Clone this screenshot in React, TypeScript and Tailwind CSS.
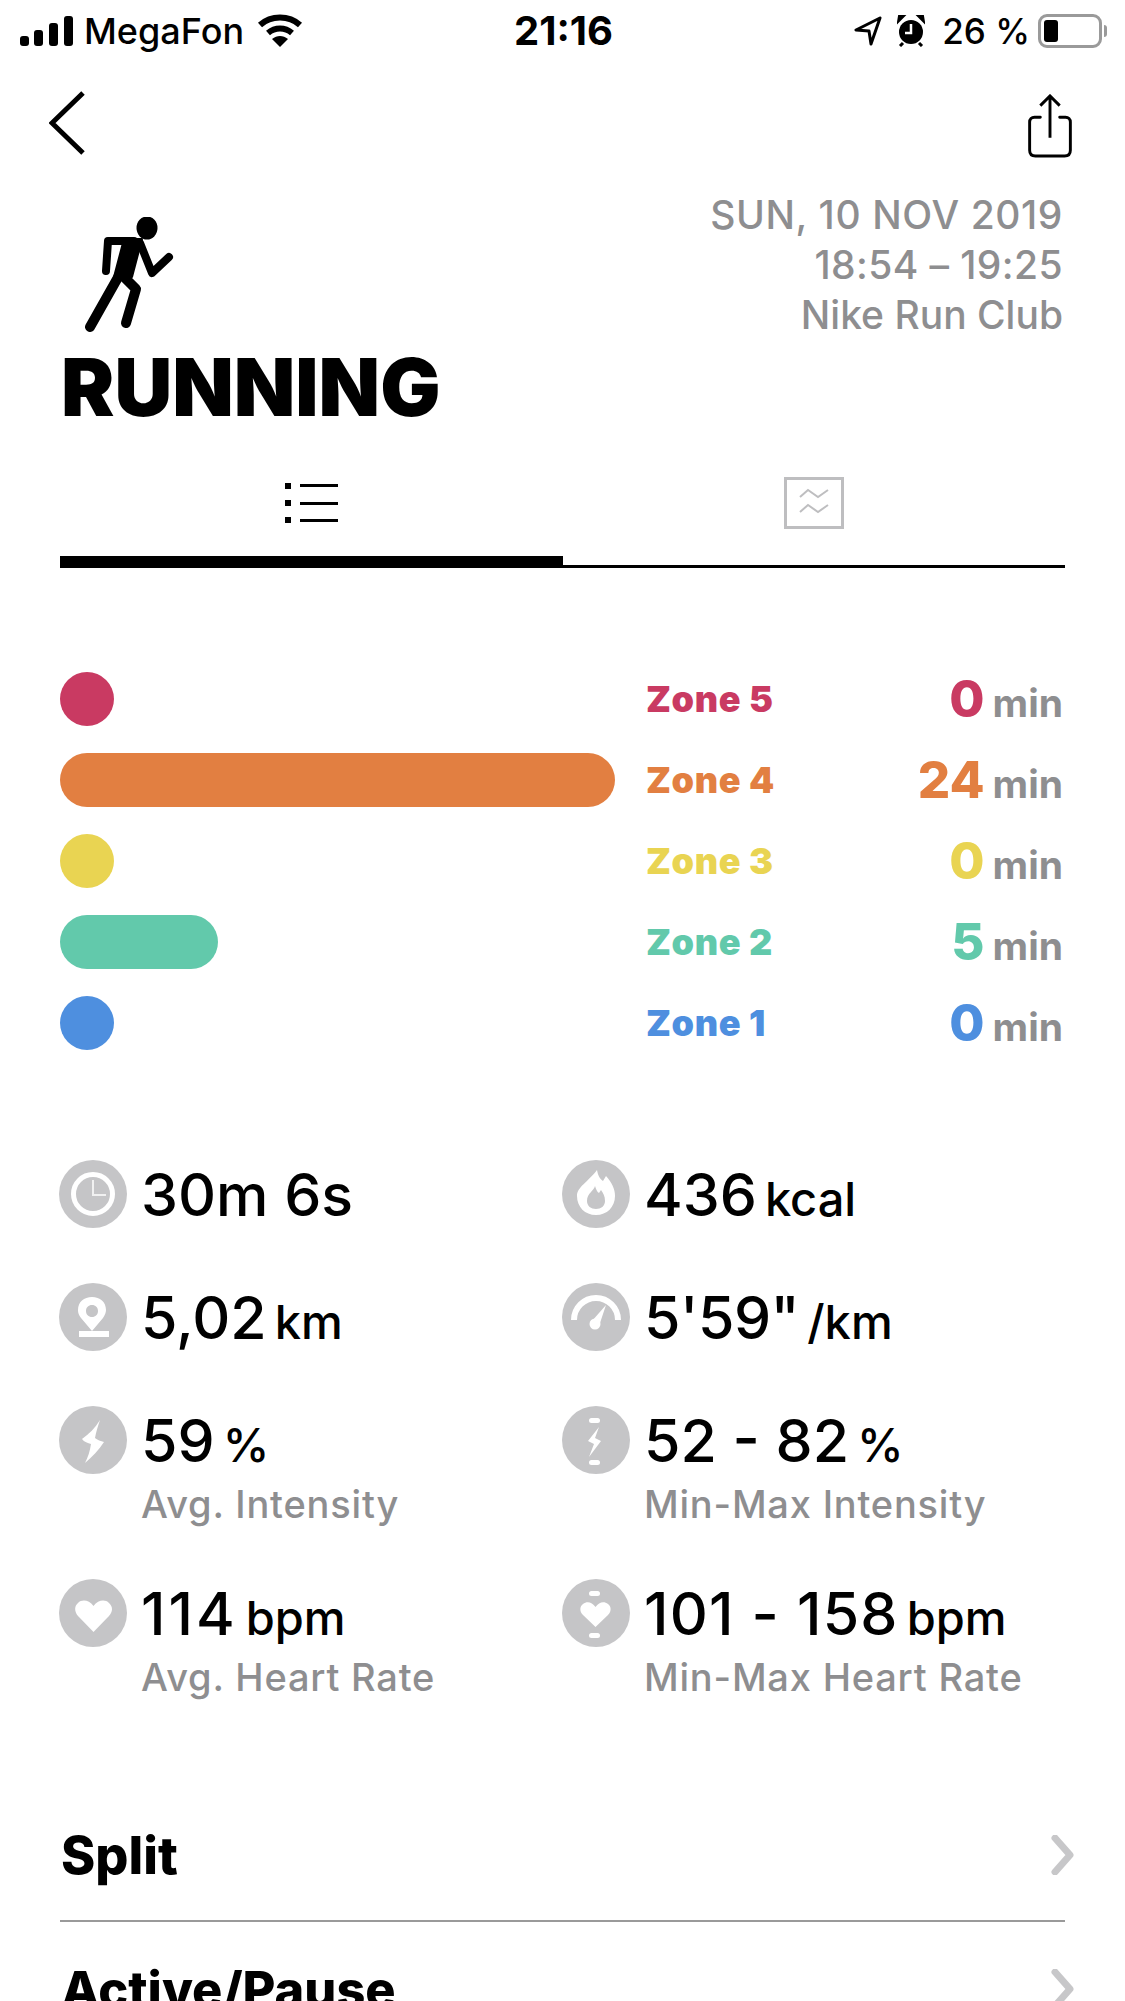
import type { ReactNode } from "react";

const zones = [
  { name: "Zone 5", mins: "0", bar: "w-[54px]", bg: "bg-[#c93a62]", text: "text-[#c93a62]" },
  { name: "Zone 4", mins: "24", bar: "w-[555px]", bg: "bg-[#e27f41]", text: "text-[#e27f41]" },
  { name: "Zone 3", mins: "0", bar: "w-[54px]", bg: "bg-[#e9d452]", text: "text-[#e9d452]" },
  { name: "Zone 2", mins: "5", bar: "w-[158px]", bg: "bg-[#62c9ab]", text: "text-[#62c9ab]" },
  { name: "Zone 1", mins: "0", bar: "w-[54px]", bg: "bg-[#4e8fdf]", text: "text-[#4e8fdf]" },
];

function Pills() {
  return (
    <>
      <rect x="27" y="12" width="11" height="5" rx="2.5" fill="#fff" />
      <rect x="27" y="54" width="11" height="5" rx="2.5" fill="#fff" />
    </>
  );
}

const icons: Record<string, ReactNode> = {
  clock: (
    <>
      <circle cx="34" cy="34" r="19.5" fill="none" stroke="#fff" strokeWidth="5" />
      <path d="M34 20V35H47" fill="none" stroke="#fff" strokeWidth="2" opacity="0.75" />
    </>
  ),
  flame: (
    <>
      <path
        fill="#fff"
        fillRule="evenodd"
        d="M35 10C36 16 38 19 41 21L44 16C50 23 53 29 53 36C53 47 45 55 34 55C23 55 15 47 15 36C15 27 26 22 35 10ZM33 26C32 31 25 33 25 41C25 46 29 49 34 49C39 49 43 46 43 41C43 36 41 33 39 30L37 33C35 32 34 29 33 26Z"
      />
    </>
  ),
  pin: (
    <>
      <path
        fill="#fff"
        fillRule="evenodd"
        d="M33 48L22 35C19 31 19 28 19 27C19 19 25 14 33 14C41 14 47 19 47 27C47 29 46 32 44 35ZM33 22C29.5 22 27 24.5 27 28C27 31.5 29.5 34 33 34C36.5 34 39 31.5 39 28C39 24.5 36.5 22 33 22Z"
      />
      <rect x="20" y="48" width="30" height="6" fill="#fff" />
    </>
  ),
  gauge: (
    <>
      <path d="M12 37A22 22 0 0 1 56 37" fill="none" stroke="#fff" strokeWidth="6" />
      <circle cx="33" cy="41" r="5.5" fill="#fff" />
      <path d="M30 38L44 22L37 43Z" fill="#fff" />
    </>
  ),
  bolt: <path fill="#fff" d="M41 14C36 22 30 28 23 33C25 36 29 37 32 38C31 45 29 51 26 57C33 51 40 44 45 36C42 35 38 34 36 32C37 26 39 20 41 14Z" />,
  boltRange: (
    <>
      <Pills />
      <path fill="#fff" d="M37 21L26 35L32 38L27 51L39 35L33 32Z" />
    </>
  ),
  heart: (
    <path
      fill="#fff"
      d="M34.5 53L19 37C15 32 15.500 27 19 24C23 20 30 21 34.500 27C39 21 46 20 50 24C54 28 54 32 50 37Z"
    />
  ),
  heartRange: (
    <>
      <Pills />
      <path
        fill="#fff"
        d="M33.500 48L21 36C17 32 18 27 21 25C25 22 30 23 33.500 28C37 23 42 22 46 25C49 27 50 32 46 36Z"
      />
    </>
  ),
};

const stats = [
  { icon: "clock", value: "30m 6s", unit: "", rowH: "h-[123px]", spacing: "" },
  { icon: "flame", value: "436", unit: "kcal", rowH: "h-[123px]", spacing: "" },
  { icon: "pin", value: "5,02", unit: "km", rowH: "h-[123px]", spacing: "" },
  { icon: "gauge", value: "5'59\"", unit: "/km", rowH: "h-[123px]", spacing: "tracking-[-0.5px]" },
  { icon: "bolt", value: "59", unit: "%", label: "Avg. Intensity", rowH: "h-[173px]", spacing: "" },
  { icon: "boltRange", value: "52 - 82", unit: "%", label: "Min-Max Intensity", rowH: "h-[173px]", spacing: "" },
  { icon: "heart", value: "114", unit: "bpm", label: "Avg. Heart Rate", rowH: "h-[209px]", spacing: "tracking-[3px]" },
  { icon: "heartRange", value: "101 - 158", unit: "bpm", label: "Min-Max Heart Rate", rowH: "h-[209px]", spacing: "tracking-[1.2px]" },
];

function Chevron() {
  return (
    <svg width="25" height="40" viewBox="0 0 25 40" fill="none">
      <path d="M5 3L20 20L5 37" stroke="#c7c7c9" strokeWidth="7" strokeLinecap="round" strokeLinejoin="round" />
    </svg>
  );
}

function StatusBar() {
  return (
    <div className="flex h-[62px] items-center justify-between pl-[20px] pr-[18px] text-[36px] leading-none text-black">
      <div className="flex w-[400px] items-center">
        <svg width="53" height="30" viewBox="0 0 53 30" fill="#000">
          <rect x="0" y="20" width="9" height="10" rx="3" />
          <rect x="14" y="14" width="9" height="16" rx="3" />
          <rect x="29" y="7" width="9" height="23" rx="3" />
          <rect x="44" y="0" width="9" height="30" rx="3" />
        </svg>
        <span className="ml-[11px] font-medium">MegaFon</span>
        <svg className="ml-[13px]" width="46" height="34" viewBox="0 0 46 34" fill="none" stroke="#000" strokeWidth="6">
          <path d="M3 11C14 1 32 1 43 11" />
          <path d="M11 19C18 13 28 13 35 19" />
          <path d="M23 33L15 25C20 21 26 21 31 25Z" fill="#000" stroke="none" />
        </svg>
      </div>
      <span className="text-[40px] font-bold">21:16</span>
      <div className="flex w-[400px] items-center justify-end">
        <svg width="28" height="30" viewBox="0 0 28 30" fill="none" stroke="#000" strokeWidth="3" strokeLinejoin="round">
          <path d="M26 2L2 14L15 15L17 28Z" />
        </svg>
        <svg className="ml-[15px]" width="28" height="32" viewBox="0 0 28 32" fill="#000">
          <circle cx="14" cy="17" r="12" />
          <path d="M1 7L7 1L2 1Z M27 7L21 1L26 1Z" stroke="#000" strokeWidth="2" />
          <path d="M14 9V18H8" fill="none" stroke="#fff" strokeWidth="2.500" />
          <path d="M6 28L3 31M22 28L25 31" stroke="#000" strokeWidth="3" />
        </svg>
        <span className="ml-[17px] text-[35px] font-medium">26 %</span>
        <div className="ml-[8px] flex items-center">
          <div className="h-[34px] w-[64px] rounded-[9px] border-[3px] border-[#9a9a9a] p-[3px]">
            <div className="h-full w-[14px] rounded-[3px] bg-black" />
          </div>
          <div className="ml-[2px] h-[12px] w-[3px] rounded-r-full bg-[#9a9a9a]" />
        </div>
      </div>
    </div>
  );
}

export default function App() {
  return (
    <div className="h-[2001px] w-[1125px] overflow-hidden bg-white [font-family:Inter,sans-serif]">
      <StatusBar />

      <div className="flex h-[128px] items-start justify-between pl-[49px] pr-[52px] pt-[29px]">
        <svg width="36" height="64" viewBox="0 0 36 64" fill="none">
          <path d="M34 2L3 32L34 62" stroke="#000" strokeWidth="5" />
        </svg>
        <svg className="mt-[3px]" width="46" height="64" viewBox="0 0 46 66" fill="none" stroke="#000" strokeWidth="3">
          <path d="M13 24H7C4 24 2 26 2 29V58C2 62 4 64 8 64H38C42 64 44 62 44 58V29C44 26 42 24 39 24H33" strokeLinecap="round" />
          <path d="M23 45V3M13 12L23 2L33 12" />
        </svg>
      </div>

      <header className="flex justify-between pl-[61px] pr-[62px]">
        <div>
          <svg className="ml-[23px] mt-[27px]" width="90" height="115" viewBox="0 0 90 115" fill="#000" stroke="#000" strokeLinecap="round" strokeLinejoin="round">
            <ellipse cx="63" cy="11" rx="10.500" ry="11.500" stroke="none" />
            <path d="M24 24L22 54M24 24H50" fill="none" strokeWidth="8" />
            <path d="M40 22H58L48 60H30Z" strokeWidth="2" />
            <path d="M50 32L6 110" fill="none" strokeWidth="10" />
            <path d="M38 58L52 72L42 106" fill="none" strokeWidth="10" />
            <path d="M56 26L68 56L85 40" fill="none" strokeWidth="8" />
          </svg>
          <h1 className="mt-[15px] text-[80px] font-black uppercase leading-[80px] text-black">Running</h1>
        </div>
        <div className="text-right text-[39px] font-medium leading-[50px] text-[#8e8e90]">
          <p className="tracking-[0.6px]">SUN, 10 NOV 2019</p>
          <p className="tracking-[0.4px]">18:54 – 19:25</p>
          <p>Nike Run Club</p>
        </div>
      </header>

      <div className="mx-[60px] flex h-[141px]">
        <div className="flex w-[503px] flex-col">
          <div className="flex flex-1 items-center justify-center pt-[23px]">
            <svg width="56" height="42" viewBox="0 0 56 42" fill="#000">
              <rect x="1" y="1" width="6" height="6" /><rect x="16" y="2" width="38" height="3" />
              <rect x="1" y="18" width="6" height="6" /><rect x="16" y="20" width="38" height="3" />
              <rect x="1" y="35" width="6" height="6" /><rect x="16" y="37" width="38" height="3" />
            </svg>
          </div>
          <div className="h-[12px] bg-black" />
        </div>
        <div className="flex flex-1 flex-col">
          <div className="flex flex-1 items-center justify-center pt-[14px]">
            <svg width="60" height="52" viewBox="0 0 60 52" fill="none" stroke="#bebec0" strokeWidth="3">
              <rect x="1.500" y="1.500" width="57" height="49" />
              <path d="M16 20L24 13L34 20L44 13M16 35L24 28L34 35L44 28" strokeWidth="2" />
            </svg>
          </div>
          <div className="h-[3px] bg-black" />
        </div>
      </div>

      <section className="pl-[60px] pr-[62px] pt-[90px]">
        {zones.map((zone) => (
          <div key={zone.name} className="flex h-[81px] items-center">
            <div className="w-[586px]">
              <div className={`h-[54px] rounded-full ${zone.bar} ${zone.bg}`} />
            </div>
            <span className={`w-[190px] text-[36px] font-black leading-none tracking-[0.6px] ${zone.text}`}>{zone.name}</span>
            <div className="flex flex-1 items-baseline justify-end">
              <span className={`text-[51px] font-extrabold leading-none ${zone.text}`}>{zone.mins}</span>
              <span className="ml-[8px] text-[39px] font-bold leading-none text-[#8e8e90]">min</span>
            </div>
          </div>
        ))}
      </section>

      <section className="grid grid-cols-[503px_1fr] pl-[59px] pt-[97px]">
        {stats.map((stat) => (
          <div key={stat.icon} className={`flex ${stat.rowH}`}>
            <div className="flex h-[68px] w-[68px] shrink-0 items-center justify-center rounded-full bg-[#c5c5c7]">
              <svg width="68" height="68" viewBox="0 0 68 68">{icons[stat.icon]}</svg>
            </div>
            <div className="ml-[14px]">
              <div className="flex h-[68px] items-baseline pt-[5px]">
                <span className={`text-[59px] font-medium leading-[60px] text-black ${stat.spacing}`}>{stat.value}</span>
                {stat.unit && <span className="ml-[8px] text-[47px] font-medium leading-[60px] text-black">{stat.unit}</span>}
              </div>
              {stat.label && <p className="mt-[8px] text-[38px] font-medium leading-[44px] tracking-[0.8px] text-[#8e8e90]">{stat.label}</p>}
            </div>
          </div>
        ))}
      </section>

      <section className="mx-[60px]">
        <div className="flex h-[134px] items-center justify-between border-b-[2px] border-[#9a9a9a]">
          <span className="ml-[1px] pt-[3px] text-[52px] font-extrabold leading-none text-black">Split</span>
          <div className="mr-[-10px] mb-[-2px]"><Chevron /></div>
        </div>
        <div className="flex h-[134px] items-center justify-between">
          <span className="ml-[1px] pt-[3px] text-[50.5px] font-extrabold leading-none text-black">Active/Pause</span>
          <div className="mr-[-10px]"><Chevron /></div>
        </div>
      </section>
    </div>
  );
}
